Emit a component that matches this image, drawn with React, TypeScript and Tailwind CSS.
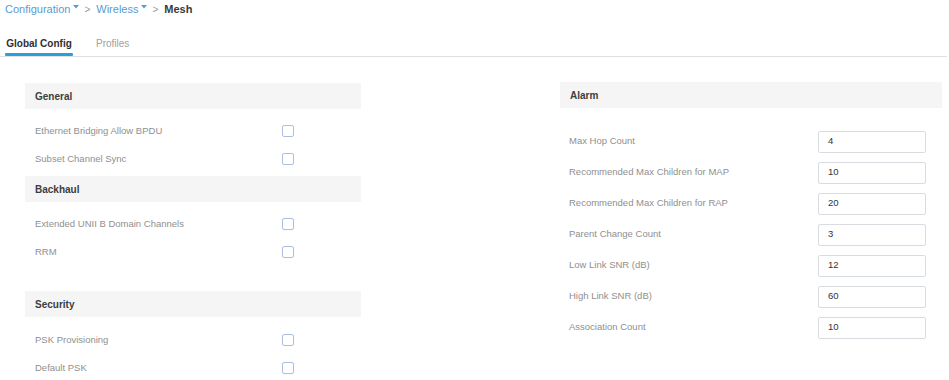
import React from "react";

const font = { fontFamily: '"Liberation Sans", Arial, sans-serif' };

function SectionHeader({ title }: { title: string }) {
  return (
    <div className="h-[26px] flex items-center pl-[10px] bg-[#f5f5f5] text-[10px] font-bold text-[#3d3d3d]">
      {title}
    </div>
  );
}

function CheckRow({ label }: { label: string }) {
  return (
    <div className="h-[28px] flex items-center pl-[10px]">
      <div className="w-[247px] text-[9.5px] text-[#8f8f8f]">{label}</div>
      <div className="w-[12px] h-[12px] border border-[#aebde0] rounded-[2px] bg-white" />
    </div>
  );
}

function InputRow({ label, value }: { label: string; value: string }) {
  return (
    <div className="h-[31px] flex items-center pl-[9px]">
      <div className="w-[249px] text-[9.5px] text-[#8f8f8f]">{label}</div>
      <div className="w-[108px] h-[22px] border border-[#d8dce0] rounded-[2px] flex items-center px-[9px] text-[9.5px] text-[#333]">
        {value}
      </div>
    </div>
  );
}

function Caret() {
  return (
    <svg width="6" height="4" viewBox="0 0 6 4" className="ml-[3px] mb-[5px]">
      <path d="M0 0 L6 0 L3 3.5 Z" fill="#5a9bd2" />
    </svg>
  );
}

export default function App() {
  return (
    <div className="w-[949px] h-[380px] bg-white overflow-hidden" style={font}>
      {/* Breadcrumb */}
      <div className="h-[18px] flex items-center pl-[5px] text-[11px]">
        <span className="text-[#5a9bd2]">Configuration</span>
        <Caret />
        <span className="ml-[5px] text-[#9a9a9a] text-[10px]">&gt;</span>
        <span className="ml-[6px] text-[#5a9bd2]">Wireless</span>
        <Caret />
        <span className="ml-[5px] text-[#9a9a9a] text-[10px]">&gt;</span>
        <span className="ml-[6px] font-bold text-[#3a3a3a]">Mesh</span>
      </div>

      {/* Tabs */}
      <div className="pt-[18px] flex border-b border-[#e0e0e0] mr-[2px]">
        <div className="ml-[5px] w-[68px] flex flex-col items-center">
          <div className="h-[14px] flex items-center text-[10px] font-bold text-[#2f2f2f]">Global Config</div>
          <div className="mt-[3px] h-[3px] w-full bg-[#2a9fd8] rounded-[1px]" />
        </div>
        <div className="ml-[23px] flex flex-col">
          <div className="h-[14px] flex items-center text-[10px] text-[#a0a0a0]">Profiles</div>
        </div>
      </div>

      {/* Content */}
      <div className="flex pl-[25px]">
        <div className="w-[336px] pt-[26px]">
          <SectionHeader title="General" />
          <div className="mt-[8px]">
            <CheckRow label="Ethernet Bridging Allow BPDU" />
            <CheckRow label="Subset Channel Sync" />
          </div>
          <div className="mt-[3px]">
            <SectionHeader title="Backhaul" />
          </div>
          <div className="mt-[8px]">
            <CheckRow label="Extended UNII B Domain Channels" />
            <CheckRow label="RRM" />
          </div>
          <div className="mt-[25px]">
            <SectionHeader title="Security" />
          </div>
          <div className="mt-[9px]">
            <CheckRow label="PSK Provisioning" />
            <CheckRow label="Default PSK" />
          </div>
        </div>

        <div className="ml-[199px] w-[382px] pt-[25px]">
          <SectionHeader title="Alarm" />
          <div className="mt-[18px]">
            <InputRow label="Max Hop Count" value="4" />
            <InputRow label="Recommended Max Children for MAP" value="10" />
            <InputRow label="Recommended Max Children for RAP" value="20" />
            <InputRow label="Parent Change Count" value="3" />
            <InputRow label="Low Link SNR (dB)" value="12" />
            <InputRow label="High Link SNR (dB)" value="60" />
            <InputRow label="Association Count" value="10" />
          </div>
        </div>
      </div>
    </div>
  );
}
